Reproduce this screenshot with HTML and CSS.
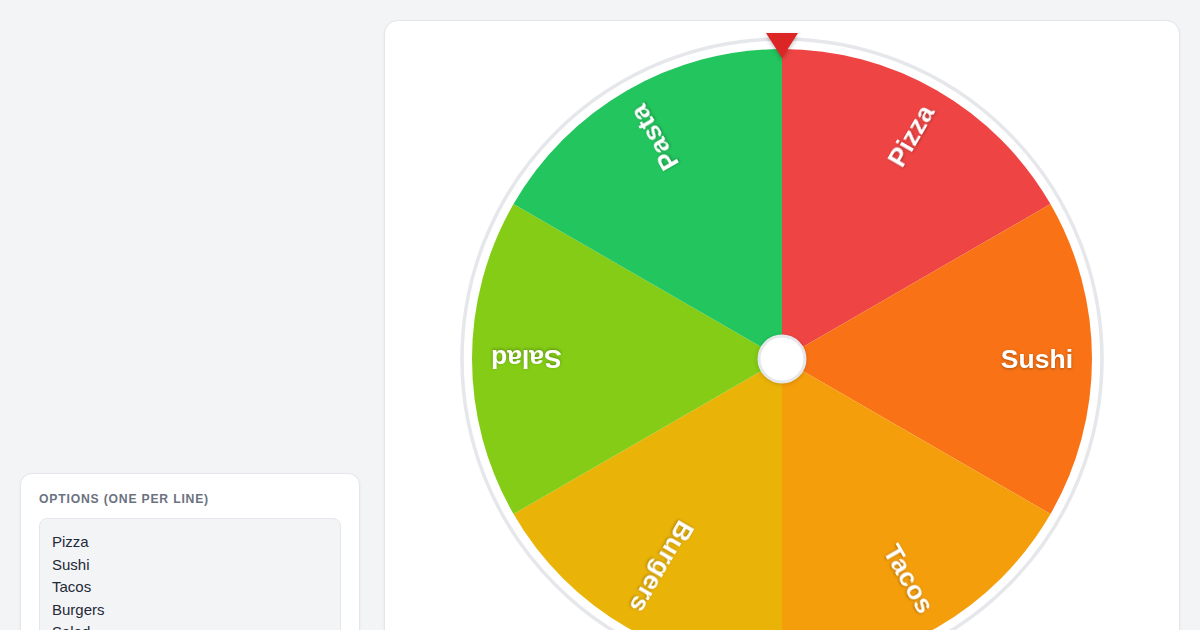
FILE: index.html
```html
<!DOCTYPE html>
<html lang="en">
<head>
    <meta charset="UTF-8">
    <meta name="viewport" content="width=device-width, initial-scale=1.0">
    <title>Spin the Wheel</title>
    <link rel="stylesheet" href="styles.css">
</head>
<body>
    <main class="layout">
        <!-- LEFT COLUMN -->
        <aside class="sidebar">
            <section class="panel">
                <label class="panel-label" for="options">Options (one per line)</label>
                <textarea id="options" class="options-input" spellcheck="false">Pizza
Sushi
Tacos
Burgers
Salad
Pasta</textarea>
            </section>
        </aside>

        <!-- WHEEL CARD -->
        <section class="wheel-card">
            <svg class="wheel" viewBox="-330 -330 660 660" width="660" height="660">
                <circle class="wheel-ring" cx="0" cy="0" r="320"></circle>
                <g class="wheel-slices">
                    <path d="M0 0 L0 -310 A310 310 0 0 1 268.47 -155 Z" fill="#ef4444"></path>
                    <path d="M0 0 L268.47 -155 A310 310 0 0 1 268.47 155 Z" fill="#f97316"></path>
                    <path d="M0 0 L268.47 155 A310 310 0 0 1 0 310 Z" fill="#f59e0b"></path>
                    <path d="M0 0 L0 310 A310 310 0 0 1 -268.47 155 Z" fill="#eab308"></path>
                    <path d="M0 0 L-268.47 155 A310 310 0 0 1 -268.47 -155 Z" fill="#84cc16"></path>
                    <path d="M0 0 L-268.47 -155 A310 310 0 0 1 0 -310 Z" fill="#22c55e"></path>
                </g>
                <g class="wheel-labels">
                    <text transform="rotate(-60)" x="291" y="9">Pizza</text>
                    <text transform="rotate(0)" x="291" y="9">Sushi</text>
                    <text transform="rotate(60)" x="291" y="9">Tacos</text>
                    <text transform="rotate(120)" x="291" y="9">Burgers</text>
                    <text transform="rotate(180)" x="291" y="9">Salad</text>
                    <text transform="rotate(240)" x="291" y="9">Pasta</text>
                </g>
                <circle class="wheel-hub" cx="0" cy="0" r="23"></circle>
                <polygon class="wheel-pointer" points="-16,-326 16,-326 0,-301"></polygon>
            </svg>
        </section>
    </main>
</body>
</html>
```

FILE: styles.css
```css
/* General Styles */
body {
    margin: 0;
    padding: 20px;
    background: #f3f4f6;
    font-family: 'Liberation Sans', Arial, sans-serif;
    color: #1f2937;
}

.layout {
    display: grid;
    grid-template-columns: 340px 1fr;
    gap: 24px;
    align-items: start;
}

/* Options Panel */
.sidebar {
    display: flex;
    flex-direction: column;
}

.panel {
    margin-top: 453px;
    background: #fff;
    border: 1px solid #e5e7eb;
    border-radius: 12px;
    box-shadow: 0 1px 3px rgba(0, 0, 0, 0.06);
    padding: 17px 18px 18px;
    display: flex;
    flex-direction: column;
}

.panel-label {
    font-size: 12.2px;
    font-weight: bold;
    line-height: 16px;
    letter-spacing: 0.8px;
    text-transform: uppercase;
    color: #6b7280;
    margin-bottom: 11px;
}

.options-input {
    font-family: 'Liberation Sans', Arial, sans-serif;
    font-size: 15px;
    line-height: 22.5px;
    color: #1f2937;
    background: #f3f4f6;
    border: 1px solid #e5e7eb;
    border-radius: 8px;
    padding: 12px 12px;
    height: 180px;
    resize: none;
    outline: none;
}

/* Wheel Card */
.wheel-card {
    background: #fff;
    border: 1px solid #e5e7eb;
    border-radius: 14px;
    box-shadow: 0 1px 3px rgba(0, 0, 0, 0.06);
    padding: 8px 0 24px;
    display: flex;
    justify-content: center;
}

.wheel {
    display: block;
    overflow: visible;
}

.wheel-ring {
    fill: #fff;
    stroke: #e5e7eb;
    stroke-width: 3.5;
}

.wheel-labels text {
    fill: #fff;
    font-family: 'Liberation Sans', Arial, sans-serif;
    font-size: 26.5px;
    font-weight: bold;
    text-anchor: end;
    filter: drop-shadow(0 1px 1.5px rgba(0, 0, 0, 0.3));
}

.wheel-hub {
    fill: #fff;
    stroke: #e5e7eb;
    stroke-width: 3;
    filter: drop-shadow(0 1px 2px rgba(0, 0, 0, 0.15));
}

.wheel-pointer {
    fill: #dc2626;
    filter: drop-shadow(0 2px 2px rgba(0, 0, 0, 0.25));
}
```
